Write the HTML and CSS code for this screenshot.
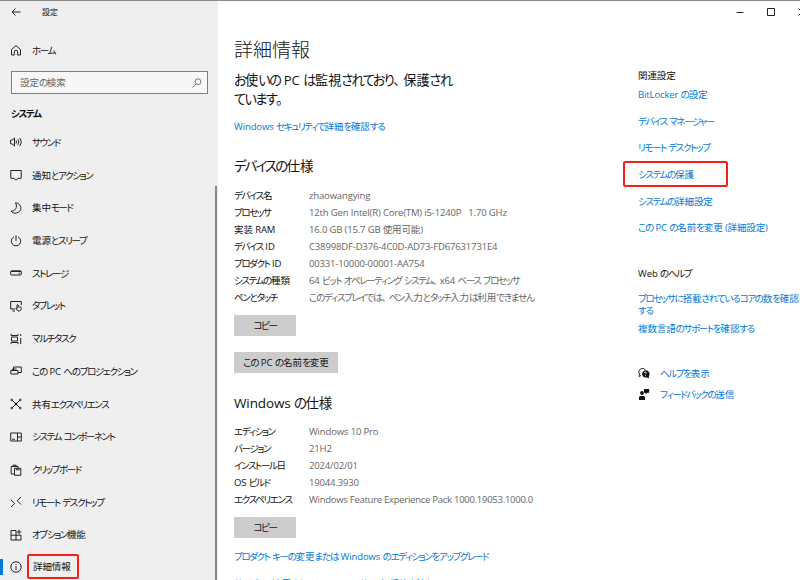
FILE: index.html
```html
<!DOCTYPE html>
<html lang="ja">
<head>
    <meta charset="UTF-8">
    <meta name="viewport" content="width=device-width, initial-scale=1.0">
    <title>設定</title>
    <link rel="stylesheet" href="styles.css">
</head>
<body>

<div class="window">
    <nav class="sidebar">
        <div class="titlebar">
            <svg class="icon back" viewBox="0 0 12 12"><path d="M10.500 6H2M5.500 2.500L2 6l3.500 3.500"/></svg>
            <span>設定</span>
        </div>
        <a class="nav-item home">
            <svg class="icon" viewBox="0 0 12 12"><path d="M1.500 5.500L6 1.500l4.500 4V11H7.700V8a1.700 1.700 0 0 0-3.400 0v3H1.500z"/></svg>
            <span>ホーム</span>
        </a>
        <div class="search">
            <span>設定の検索</span>
            <svg class="icon" viewBox="0 0 12 12"><circle cx="7" cy="4.700" r="2.900"/><path d="M5 7L1.500 10.500"/></svg>
        </div>
        <h2 class="group">システム</h2>
        <a class="nav-item">
            <svg class="icon" viewBox="0 0 12 12"><path d="M.5 4.200H2L4.500 2v8L2 7.800H.5zM6 4.500q1 1.500 0 3M7.800 3.200q2 2.800 0 5.600M9.600 2q3.200 4 0 8"/></svg>
            <span>サウンド</span>
        </a>
        <a class="nav-item">
            <svg class="icon" viewBox="0 0 12 12"><path d="M.8 1.500h10.400v7.800H8L6 11.200 4 9.300H.8z"/></svg>
            <span>通知とアクション</span>
        </a>
        <a class="nav-item">
            <svg class="icon" viewBox="0 0 12 12"><path d="M5.500 .8C12 1.200 13 9.500 6.500 11 4 11.500 2 10.500 1 9c4 .5 7-3.500 4.500-8.200z"/></svg>
            <span>集中モード</span>
        </a>
        <a class="nav-item">
            <svg class="icon" viewBox="0 0 12 12"><path d="M6 .5v5.500M3.800 2a4.700 4.700 0 1 0 4.400 0"/></svg>
            <span>電源とスリープ</span>
        </a>
        <a class="nav-item">
            <svg class="icon" viewBox="0 0 12 12"><rect x=".7" y="3.800" width="10.600" height="4.200" rx=".8"/><path d="M1 4.500h10M8.500 6.300h1.500"/></svg>
            <span>ストレージ</span>
        </a>
        <a class="nav-item">
            <svg class="icon" viewBox="0 0 12 12"><path d="M5 9H.7V1.500h10.600V5M2.500 11H5M7 9V5q.8-1 1.200 0v2h2.300q1 0 .8 1.500-.3 2.500-2 2.500H8L5.800 8.500q.4-.8 1.200 0"/></svg>
            <span>タブレット</span>
        </a>
        <a class="nav-item">
            <svg class="icon" viewBox="0 0 12 12"><path d="M1 .8v1.700h7V.8M1 11.200V9.500h7v1.700M1.500 4h6v4h-6zM10.700 1v2M10.700 5v6"/></svg>
            <span>マルチタスク</span>
        </a>
        <a class="nav-item">
            <svg class="icon" viewBox="0 0 12 12"><path d="M3.500 5.500V2h7.800v5.500H8M.8 5.500H8V9H.8zM2.500 5.500v-1.500h4"/></svg>
            <span>この PC へのプロジェクション</span>
        </a>
        <a class="nav-item">
            <svg class="icon" viewBox="0 0 12 12"><path d="M2 2l8 8M10 2l-8 8"/><circle cx="1.700" cy="1.900" r=".8"/><circle cx="10.300" cy="1.900" r=".8"/><circle cx="1.700" cy="10.100" r=".8"/><circle cx="10.300" cy="10.100" r=".8"/><circle class="solid" cx="6" cy="6" r="1.300"/></svg>
            <span>共有エクスペリエンス</span>
        </a>
        <a class="nav-item">
            <svg class="icon" viewBox="0 0 12 12"><path d="M.7 2h10.600v8H.7zM7.500 2v8M7.500 6h3.800M2 8.200h3"/></svg>
            <span>システム コンポーネント</span>
        </a>
        <a class="nav-item">
            <svg class="icon" viewBox="0 0 12 12"><path d="M4 10H1.200V2.500H8V4M3 2.500V1.200h3.200v1.300M4.500 4.300h6.300v7H4.500zM6.300 4.300v1.500h2.800V4.300"/></svg>
            <span>クリップボード</span>
        </a>
        <a class="nav-item">
            <svg class="icon" viewBox="0 0 12 12"><path d="M1 4l3.700 3.500L1 11M11 1L7.200 4.700 11 8.500"/></svg>
            <span>リモート デスクトップ</span>
        </a>
        <a class="nav-item">
            <svg class="icon" viewBox="0 0 12 12"><path d="M6 1.500H1V11h10V6.200H1M6 1.500V11M9 .7v4.600M6.700 3h4.600"/></svg>
            <span>オプション機能</span>
        </a>
        <a class="nav-item active">
            <svg class="icon" viewBox="0 0 12 12"><circle cx="6" cy="6" r="5.200"/><path d="M6 5v4M6 3v1"/></svg>
            <span class="marked">詳細情報</span>
        </a>
        <div class="scrollbar"></div>
    </nav>

    <div class="page">
        <div class="controls">
            <svg class="icon" viewBox="0 0 12 12"><path d="M2.500 6.500h7"/></svg>
            <svg class="icon" viewBox="0 0 12 12"><path d="M2.500 2.500h7v7h-7z"/></svg>
            <svg class="icon" viewBox="0 0 12 12"><path d="M2.500 2.500l7 7M9.500 2.500l-7 7"/></svg>
        </div>
        <div class="columns">
            <main>
                <h1>詳細情報</h1>
                <p class="status">お使いの PC は監視されており、保護され<br>ています。</p>
                <a class="link security">Windows セキュリティで詳細を確認する</a>

                <h2>デバイスの仕様</h2>
                <dl>
                    <dt>デバイス名</dt><dd>zhaowangying</dd>
                    <dt>プロセッサ</dt><dd>12th Gen Intel(R) Core(TM) i5-1240P &nbsp; 1.70 GHz</dd>
                    <dt>実装 RAM</dt><dd>16.0 GB (15.7 GB 使用可能)</dd>
                    <dt>デバイス ID</dt><dd>C38998DF-D376-4C0D-AD73-FD67631731E4</dd>
                    <dt>プロダクト ID</dt><dd>00331-10000-00001-AA754</dd>
                    <dt>システムの種類</dt><dd>64 ビット オペレーティング システム、x64 ベース プロセッサ</dd>
                    <dt>ペンとタッチ</dt><dd>このディスプレイでは、ペン入力とタッチ入力は利用できません</dd>
                </dl>
                <button class="copy">コピー</button>
                <button class="rename">この PC の名前を変更</button>

                <h2 class="windows">Windows の仕様</h2>
                <dl>
                    <dt>エディション</dt><dd>Windows 10 Pro</dd>
                    <dt>バージョン</dt><dd>21H2</dd>
                    <dt>インストール日</dt><dd>2024/02/01</dd>
                    <dt>OS ビルド</dt><dd>19044.3930</dd>
                    <dt>エクスペリエンス</dt><dd class="pack">Windows Feature Experience Pack 1000.19053.1000.0</dd>
                </dl>
                <button class="copy">コピー</button>
                <a class="link upgrade">プロダクト キーの変更または Windows のエディションをアップグレード</a>
                <a class="link terms">サービスに適用される Microsoft サービス規約を読む</a>
            </main>

            <aside>
                <h3>関連設定</h3>
                <ul class="related">
                    <li><a class="link">BitLocker の設定</a></li>
                    <li><a class="link">デバイス マネージャー</a></li>
                    <li><a class="link">リモート デスクトップ</a></li>
                    <li class="marked"><a class="link">システムの保護</a></li>
                    <li><a class="link">システムの詳細設定</a></li>
                    <li><a class="link">この PC の名前を変更 (詳細設定)</a></li>
                </ul>
                <h3>Web のヘルプ</h3>
                <ul class="web-help">
                    <li><a class="link">プロセッサに搭載されているコアの数を確認<br>する</a></li>
                    <li><a class="link">複数言語のサポートを確認する</a></li>
                </ul>
                <ul class="support">
                    <li>
                        <svg class="icon" viewBox="0 0 12 12"><path d="M3 8.500L1 9.500l.5-2.300A3.500 3.500 0 1 1 7.500 3"/><path class="solid" d="M7.500 3.200a3.700 3.700 0 1 0 1.500 7.200l2.200 1-.5-2.200a3.700 3.700 0 0 0-3.200-6z"/><path class="mark" d="M6.400 6q.2-1.200 1.300-1T8 6.700l-.5.6M7.500 8.200v1"/></svg>
                        <a class="link">ヘルプを表示</a>
                    </li>
                    <li>
                        <svg class="icon" viewBox="0 0 12 12"><circle class="solid" cx="4" cy="5" r="1.900"/><path class="solid" d="M1 12V9.500q0-1.500 1.200-1.500h3.500Q7 8 7 9.500V12zM6 1h5.200v3.800H9.300L7.500 6.500V4.800H6z"/></svg>
                        <a class="link">フィードバックの送信</a>
                    </li>
                </ul>
            </aside>
        </div>
    </div>
</div>

<script src="script.js"></script>
</body>
</html>
```
FILE: styles.css
```css
* {
    box-sizing: border-box;
}

body {
    margin: 0;
    font-family: "Open Sans", "Noto Sans CJK JP", sans-serif;
    font-size: 9.5px;
    letter-spacing: -0.012em;
    color: #111;
    background-color: #fff;
    overflow: hidden;
}

h1, h2, h3, p, dl, dd, ul {
    margin: 0;
    padding: 0;
    font-weight: normal;
}

ul {
    list-style: none;
}

/* narrow UI kana */
.hiragana {
    font-feature-settings: "palt";
    letter-spacing: -0.12em;
}

.katakana {
    font-feature-settings: "palt";
    letter-spacing: -0.145em;
}

.comma {
    letter-spacing: -0.25em;
}

.window {
    display: grid;
    grid-template-columns: 218px 1fr;
    height: 580px;
    border-top: 1px solid #8a8a8a;
    overflow: hidden;
}

.icon {
    width: 12px;
    height: 12px;
    flex: none;
    fill: none;
    stroke: #222;
    stroke-width: 1;
}

.icon .solid {
    fill: #111;
    stroke: none;
}

.icon .mark {
    stroke: #fff;
    stroke-width: 0.8;
}

.marked {
    border: 2px solid #f5201a;
    border-radius: 2px;
}

/* sidebar */
.sidebar {
    position: relative;
    background-color: #efefef;
    white-space: nowrap;
}

.titlebar {
    display: flex;
    align-items: center;
    gap: 20px;
    height: 21px;
    padding-left: 10px;
    font-size: 8px;
}

.titlebar span {
    padding-bottom: 1px;
}

.nav-item {
    display: flex;
    align-items: center;
    gap: 10px;
    height: 32.72px;
    padding-left: 10px;
}

.nav-item.home {
    height: 32px;
    margin-top: 12px;
    margin-bottom: 5px;
}

.nav-item span {
    padding-bottom: 1px;
}

.search {
    display: flex;
    align-items: center;
    justify-content: space-between;
    width: 197px;
    height: 23px;
    margin-left: 11px;
    padding: 0 4px 0 8px;
    border: 1px solid #7f7f7f;
    background-color: #f7f7f7;
    color: #666;
}

.search span {
    padding-bottom: 2px;
}

.search .icon {
    stroke: #777;
}

.group {
    margin: 12px 0 4px 11px;
    font-size: 9.5px;
    font-weight: bold;
    line-height: 16px;
}

.nav-item.active {
    padding-left: 7px;
    border-left: 3px solid #0078d7;
    height: 16px;
    margin-top: 8px;
}

.nav-item.active .marked {
    margin: -2px 0 0 -5px;
    padding: 0 6px 0 4px;
    height: 25px;
    line-height: 22px;
}

.scrollbar {
    position: absolute;
    top: 185px;
    right: 1px;
    bottom: 0;
    width: 2px;
    background-color: #858585;
}

/* page */
.controls {
    display: flex;
    gap: 19px;
    height: 21px;
    align-items: center;
    padding-left: 516px;
}

.columns {
    display: grid;
    grid-template-columns: 404px 178px;
}

main {
    padding: 15px 0 0 16px;
    white-space: nowrap;
}

.link {
    color: #0078d7;
}

h1 {
    font-size: 19px;
    line-height: 26px;
    font-weight: 300;
    letter-spacing: 0;
}

.status {
    margin-top: 8px;
    font-size: 13.2px;
    line-height: 19px;
    letter-spacing: 0;
}

main .link {
    display: block;
    line-height: 16px;
}

.security {
    margin-top: 10px;
}

main h2 {
    margin-top: 21px;
    font-size: 13.5px;
    line-height: 20px;
}

main h2.windows {
    margin-top: 20px;
}

dl {
    display: grid;
    grid-template-columns: 75px 1fr;
    grid-auto-rows: 17px;
    line-height: 17px;
    margin-top: 11px;
}

.windows + dl {
    margin-top: 10px;
}

dd {
    color: #666;
    letter-spacing: -0.016em;
}

dd.pack {
    letter-spacing: -0.028em;
}

button {
    display: block;
    height: 21px;
    padding: 0;
    border: none;
    background-color: #ccc;
    color: #111;
    font-family: inherit;
    font-size: 9.5px;
    line-height: 21px;
}

.copy {
    width: 62px;
    margin-top: 9px;
}

.rename {
    width: 104px;
    margin-top: 16px;
}

.upgrade {
    margin-top: 11px;
}

.terms {
    margin-top: 11px;
}

/* right column */
aside {
    padding: 46px 0 0 16px;
    white-space: nowrap;
}

h3 {
    font-size: 9.5px;
    line-height: 16px;
}

.related {
    margin-top: -3px;
    margin-bottom: 25px;
}

.related li {
    display: flex;
    align-items: center;
    height: 26.6px;
}

.related .marked {
    width: 105px;
    margin-left: -15px;
    padding-left: 13px;
}

.web-help {
    margin-top: 11px;
    line-height: 12px;
}

.web-help li {
    margin-bottom: 6px;
}

.support {
    margin-top: 28px;
}

.support li {
    display: flex;
    align-items: center;
    gap: 10px;
    height: 21px;
}
```
FILE: script.js
```javascript
// Wrap every run of kana in a span so it can be set narrower than kanji
const walker = document.createTreeWalker(document.querySelector(".window"), NodeFilter.SHOW_TEXT);
const nodes = [];
while (walker.nextNode()) {
    nodes.push(walker.currentNode);
}

function kanaClass(text) {
    if (/[\u3001]/.test(text)) return "comma";
    if (/[\u3041-\u309f]/.test(text)) return "hiragana";
    if (/[\u30a0-\u30ff]/.test(text)) return "katakana";
    return "";
}

nodes.forEach(node => {
    if (!kanaClass(node.data)) return;
    const run = document.createElement("span");
    node.data.split(/(\u3001|[\u3041-\u309f]+|[\u30a0-\u30ff]+)/).forEach(part => {
        if (!part) return;
        const name = kanaClass(part);
        if (name) {
            const kana = document.createElement("span");
            kana.className = name;
            kana.textContent = part;
            run.appendChild(kana);
        } else {
            run.appendChild(document.createTextNode(part));
        }
    });
    node.replaceWith(...run.childNodes);
});
```
